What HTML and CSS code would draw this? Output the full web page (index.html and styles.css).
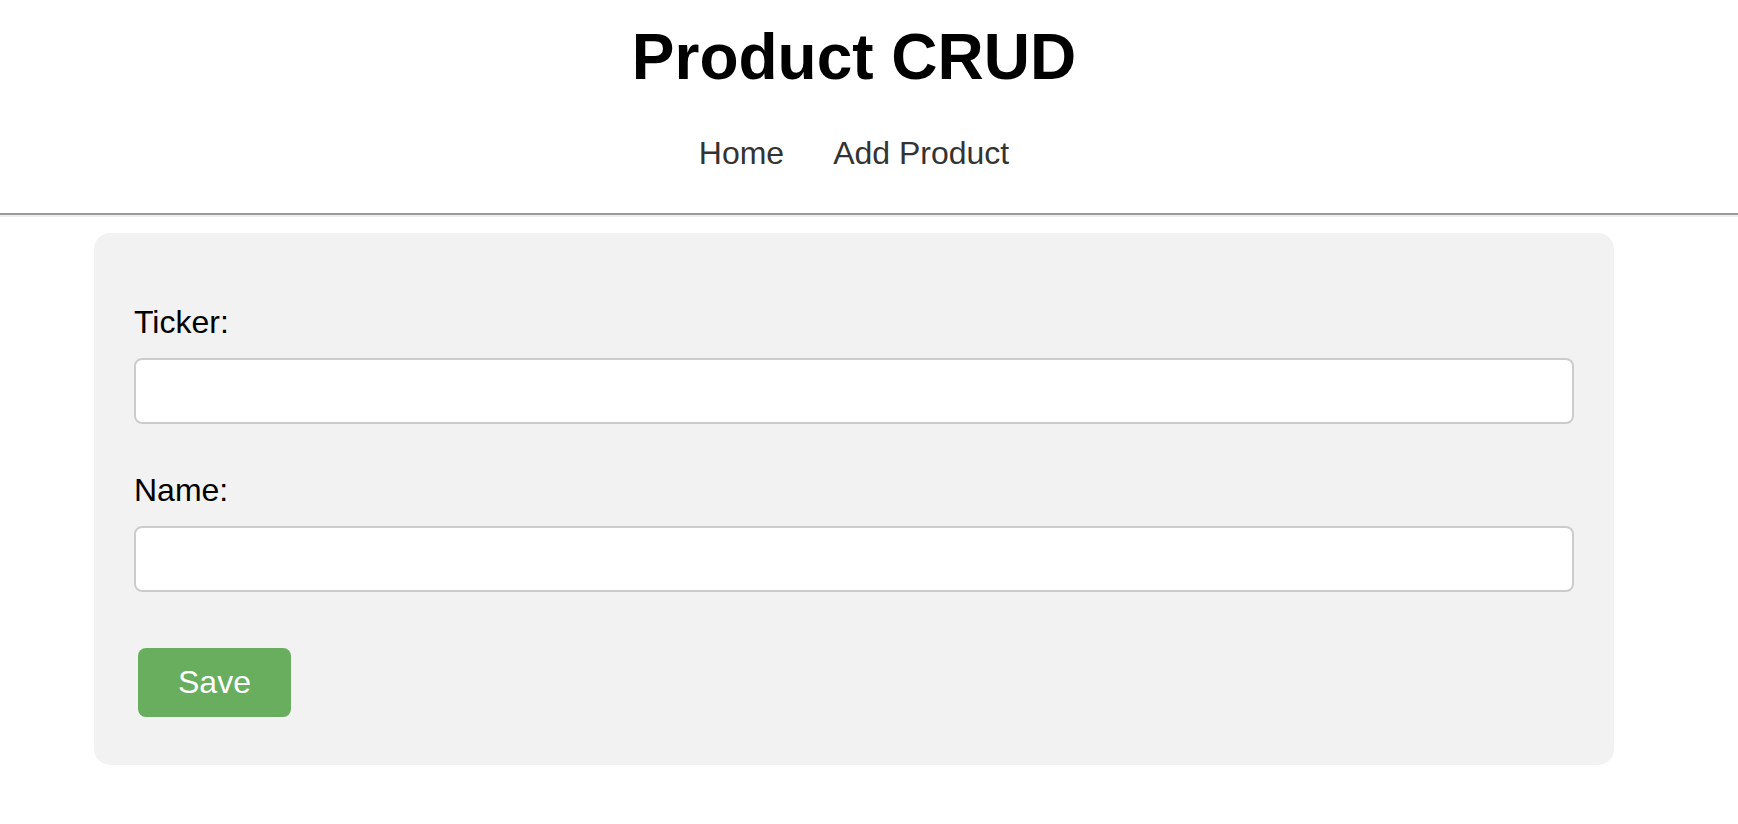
FILE: index.html
```html
<!DOCTYPE html>
<html lang="en">
<head>
<meta charset="utf-8">
<title>Product CRUD</title>
<link rel="stylesheet" href="styles.css">
</head>
<body>
<header class="header">
  <h1 class="title">Product CRUD</h1>
  <nav class="nav">
    <a class="nav-link" href="#">Home</a>
    <a class="nav-link" href="#">Add Product</a>
  </nav>
</header>
<hr class="divider">
<main class="card">
  <form class="form">
    <div class="field">
      <label class="label" for="ticker">Ticker:</label>
      <input class="input" id="ticker" type="text">
    </div>
    <div class="field">
      <label class="label" for="name">Name:</label>
      <input class="input" id="name" type="text">
    </div>
    <div class="actions">
      <button class="btn" type="button">Save</button>
    </div>
  </form>
</main>
</body>
</html>
```

FILE: styles.css
```css
* { box-sizing: border-box; }

html, body {
  margin: 0;
  padding: 0;
  background: #ffffff;
}

body {
  font-family: "Liberation Sans", Arial, sans-serif;
  font-size: 32px;
  color: #000;
}

.header {
  display: flex;
  flex-direction: column;
  align-items: center;
  padding: 20px 30px 41px 0;
}

.title {
  margin: 0;
  font-size: 64px;
  line-height: 74px;
  font-weight: 700;
  color: #000;
}

.nav {
  margin-top: 41px;
  display: flex;
  gap: 49px;
  line-height: 37px;
}

.nav-link {
  color: #333333;
  text-decoration: none;
}

.divider {
  margin: 0;
  height: 0;
  border: 0;
  border-top: 2px solid #999999;
  border-bottom: 2px solid #eeeeee;
}

.card {
  margin: 16px 124px 0 94px;
  padding: 71px 40px 48px 40px;
  background: #f2f2f2;
  border-radius: 16px;
}

.form {
  display: flex;
  flex-direction: column;
  gap: 48px;
}

.field {
  display: flex;
  flex-direction: column;
  gap: 17px;
}

.label {
  line-height: 37px;
  color: #000;
}

.input {
  display: block;
  width: 100%;
  height: 66px;
  margin: 0;
  border: 2px solid #cccccc;
  border-radius: 8px;
  background: #ffffff;
  font-family: inherit;
  font-size: 32px;
  padding: 0 16px;
}

.actions {
  display: flex;
  padding-top: 8px;
}

.btn {
  margin-left: 4px;
  padding: 16px 40px;
  border: 0;
  border-radius: 8px;
  background: #68ae5e;
  color: #ffffff;
  font-family: inherit;
  font-size: 32px;
  line-height: 37px;
  cursor: pointer;
}
```
